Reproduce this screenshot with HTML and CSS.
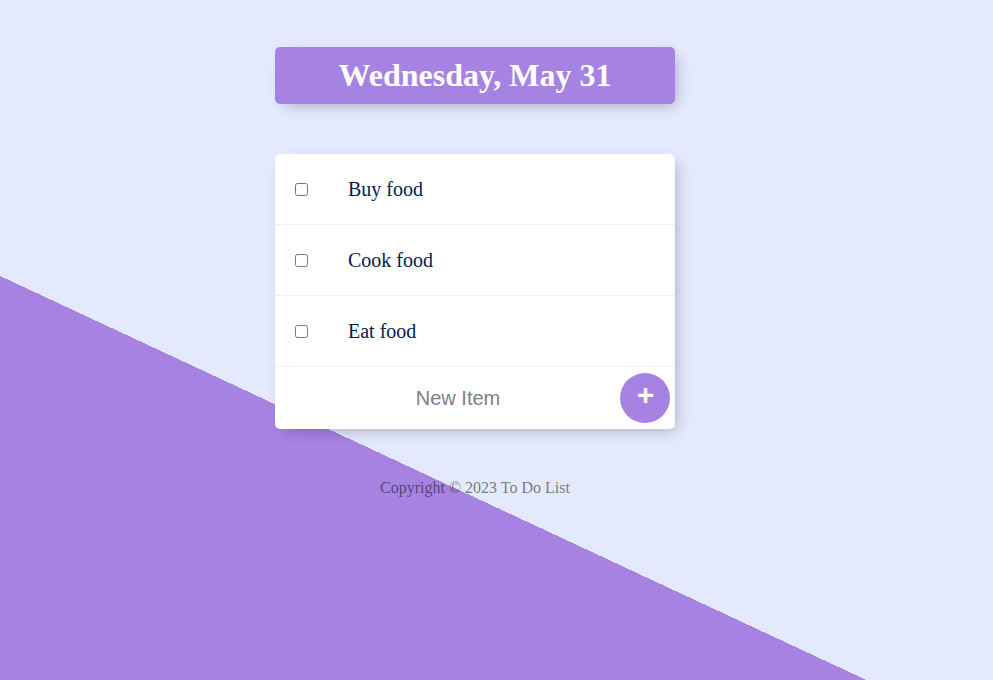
FILE: index.html
```html
<!DOCTYPE html>
<html lang="en">
<head>
<meta charset="utf-8">
<title>To Do List</title>
<link rel="stylesheet" href="styles.css">
</head>
<body>
  <div class="box heading">
    <h1 class="title">Wednesday, May 31</h1>
  </div>
  <div class="box list">
    <div class="item">
      <input type="checkbox" class="check">
      <p class="item-text">Buy food</p>
    </div>
    <div class="item">
      <input type="checkbox" class="check">
      <p class="item-text">Cook food</p>
    </div>
    <div class="item">
      <input type="checkbox" class="check">
      <p class="item-text">Eat food</p>
    </div>
    <form class="item-form">
      <input type="text" class="new-item" placeholder="New Item" autocomplete="off"> <button type="button" class="add">+</button>
    </form>
  </div>
  <footer class="footer">Copyright © 2023 To Do List</footer>
</body>
</html>
```

FILE: styles.css
```css
html {
  background-color: #E4E9FD;
  background-image: linear-gradient(25deg, #A683E3 50%, #E4E9FD 50%);
  background-repeat: no-repeat;
  background-size: 100% 1015px;
  font-family: "Liberation Serif", "Times New Roman", serif;
}

body {
  margin: 0;
  padding: 47px 51px 0 8px;
}

.box {
  max-width: 400px;
  margin: 0 auto;
  background: #fff;
  border-radius: 5px;
  box-shadow: 5px 5px 15px -5px rgba(0, 0, 0, 0.3);
}

.heading {
  background-color: #A683E3;
  text-align: center;
  margin-bottom: 50px;
}

.title {
  margin: 0;
  color: #fff;
  padding: 10px;
  font-size: 32px;
  font-weight: bold;
  line-height: 37px;
}

.item {
  min-height: 70px;
  display: flex;
  align-items: center;
  border-bottom: 1px solid #F1F1F1;
}

.check {
  margin: 20px;
  width: 13px;
  height: 13px;
}

.item-text {
  margin: 0;
  padding: 20px;
  font-size: 20px;
  color: #00204a;
  line-height: 23px;
}

.item-form {
  text-align: center;
  margin: 0 0 0 20px;
  height: 62px;
  display: flex;
  align-items: center;
  justify-content: center;
  gap: 5px;
  padding-left: 1px;
}

.new-item {
  text-align: center;
  height: 60px;
  border: none;
  background: transparent;
  font-family: "Liberation Sans", Arial, sans-serif;
  font-size: 20px;
  width: 313px;
  padding: 1px 2px;
  box-sizing: border-box;
  margin: 0;
}

.new-item:focus {
  outline: none;
}

.new-item::placeholder {
  color: grey;
  opacity: 1;
}

.add {
  height: 50px;
  width: 50px;
  border-radius: 50%;
  border: 0;
  background-color: #A683E3;
  color: #fff;
  font-family: "Liberation Sans", Arial, sans-serif;
  font-size: 30px;
  font-weight: bold;
  line-height: 30px;
  padding: 0 0 6px 2px;
  margin: 0;
}

.footer {
  margin: 50px 0 0;
  color: rgba(0, 0, 0, 0.5);
  text-align: center;
  font-size: 16px;
  line-height: 18px;
}
```
